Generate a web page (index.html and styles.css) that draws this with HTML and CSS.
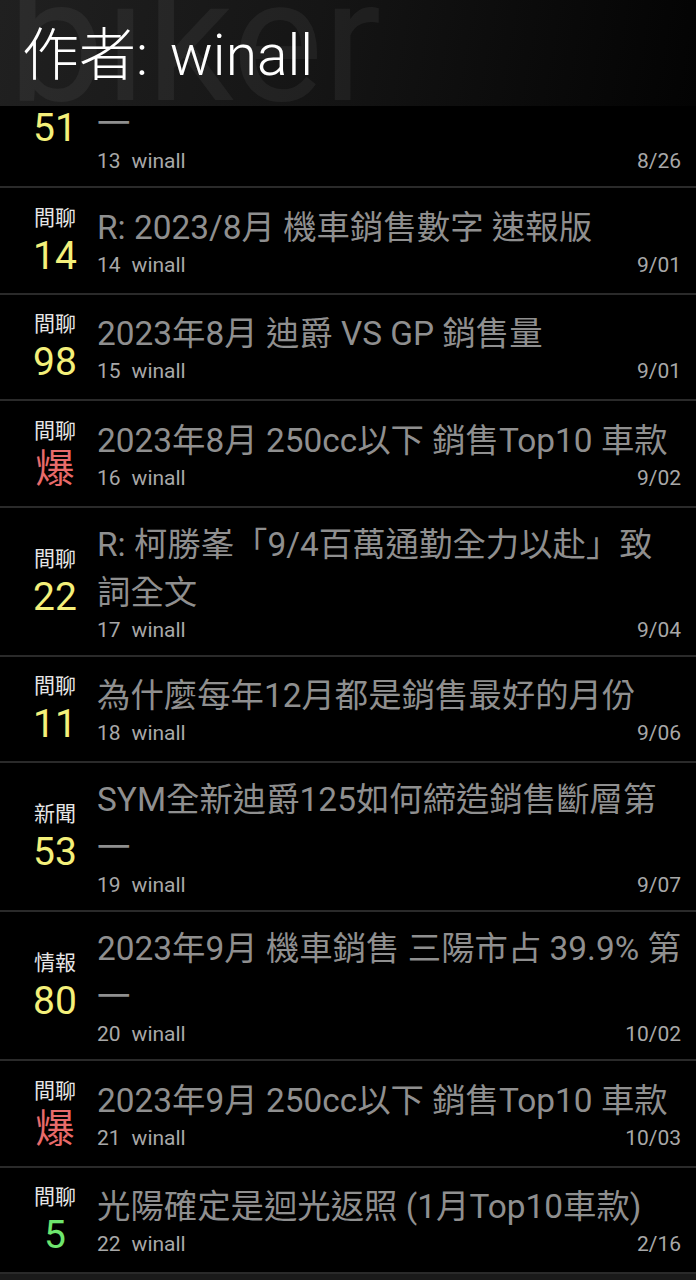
FILE: index.html
```html
<!DOCTYPE html>
<html lang="zh-Hant">
<head>
<meta charset="utf-8">
<title>作者: winall</title>
<link rel="stylesheet" href="styles.css">
</head>
<body>
<div class="screen">
  <header class="appbar">
    <span class="watermark">biker</span>
    <h1 class="appbar-title">作者: winall</h1>
  </header>
  <main class="list">
    <div class="row">
      <div class="side"><div class="tag">情報</div><div class="count yellow">51</div></div>
      <div class="body"><div class="title">2023年7月 機車銷售 三陽市占 40.1% 第一</div><div class="meta"><span class="num">13</span><span class="author">winall</span><span class="date">8/26</span></div></div>
    </div>
    <div class="row">
      <div class="side"><div class="tag">間聊</div><div class="count yellow">14</div></div>
      <div class="body"><div class="title">R: 2023/8月 機車銷售數字 速報版</div><div class="meta"><span class="num">14</span><span class="author">winall</span><span class="date">9/01</span></div></div>
    </div>
    <div class="row">
      <div class="side"><div class="tag">間聊</div><div class="count yellow">98</div></div>
      <div class="body"><div class="title">2023年8月 迪爵 VS GP 銷售量</div><div class="meta"><span class="num">15</span><span class="author">winall</span><span class="date">9/01</span></div></div>
    </div>
    <div class="row">
      <div class="side"><div class="tag">間聊</div><div class="count red">爆</div></div>
      <div class="body"><div class="title">2023年8月 250cc以下 銷售Top10 車款</div><div class="meta"><span class="num">16</span><span class="author">winall</span><span class="date">9/02</span></div></div>
    </div>
    <div class="row">
      <div class="side"><div class="tag">間聊</div><div class="count yellow">22</div></div>
      <div class="body"><div class="title">R: 柯勝峯「9/4百萬通勤全力以赴」致詞全文</div><div class="meta"><span class="num">17</span><span class="author">winall</span><span class="date">9/04</span></div></div>
    </div>
    <div class="row">
      <div class="side"><div class="tag">間聊</div><div class="count yellow">11</div></div>
      <div class="body"><div class="title">為什麼每年12月都是銷售最好的月份</div><div class="meta"><span class="num">18</span><span class="author">winall</span><span class="date">9/06</span></div></div>
    </div>
    <div class="row">
      <div class="side"><div class="tag">新聞</div><div class="count yellow">53</div></div>
      <div class="body"><div class="title">SYM全新迪爵125如何締造銷售斷層第一</div><div class="meta"><span class="num">19</span><span class="author">winall</span><span class="date">9/07</span></div></div>
    </div>
    <div class="row">
      <div class="side"><div class="tag">情報</div><div class="count yellow">80</div></div>
      <div class="body"><div class="title">2023年9月 機車銷售 三陽市占 39.9% 第一</div><div class="meta"><span class="num">20</span><span class="author">winall</span><span class="date">10/02</span></div></div>
    </div>
    <div class="row">
      <div class="side"><div class="tag">間聊</div><div class="count red">爆</div></div>
      <div class="body"><div class="title">2023年9月 250cc以下 銷售Top10 車款</div><div class="meta"><span class="num">21</span><span class="author">winall</span><span class="date">10/03</span></div></div>
    </div>
    <div class="row">
      <div class="side"><div class="tag">間聊</div><div class="count green">5</div></div>
      <div class="body"><div class="title">光陽確定是迴光返照 (1月Top10車款)</div><div class="meta"><span class="num">22</span><span class="author">winall</span><span class="date">2/16</span></div></div>
    </div>
    <div class="list-end"></div>
  </main>
</div>
</body>
</html>
```

FILE: styles.css
```css
* { box-sizing: border-box; }
html, body {
  margin: 0;
  padding: 0;
  background: #000;
}
body {
  font-family: Roboto, "Noto Sans CJK TC", sans-serif;
  color: #8f8f8f;
}
.screen {
  position: relative;
  width: 696px;
  height: 1280px;
  overflow: hidden;
  background: #000;
}
.appbar {
  position: absolute;
  top: 0;
  left: 0;
  right: 0;
  height: 106px;
  z-index: 2;
  overflow: hidden;
  background: linear-gradient(100deg, #202020 0%, #151515 45%, #0b0b0b 75%, #030303 100%);
}
.watermark {
  position: absolute;
  left: 8px;
  top: -45px;
  font-family: Roboto, sans-serif;
  font-size: 172px;
  line-height: 1;
  color: rgba(255, 255, 255, 0.055);
  white-space: nowrap;
}
.appbar-title {
  position: relative;
  margin: 0;
  padding: 21px 0 0 22px;
  font-family: Roboto, "Noto Sans CJK TC", sans-serif;
  font-weight: 300;
  font-size: 57px;
  line-height: 70px;
  word-spacing: 8px;
  color: #fff;
  white-space: nowrap;
}
.list {
  padding-top: 39px;
}
.row {
  display: flex;
  align-items: center;
  min-height: 106.5px;
  padding: 13px 15px 12px 0;
  border-bottom: 2px solid #2a2a2a;
}
.side {
  flex: 0 0 70px;
  margin-left: 20px;
  margin-right: 7px;
  display: flex;
  flex-direction: column;
  align-items: center;
}
.tag {
  font-size: 21px;
  line-height: 30px;
  color: #e6e6e6;
}
.count {
  font-size: 39px;
  line-height: 46px;
}
.yellow { color: #f4f07a; }
.red { color: #e86a6a; }
.green { color: #6ee66e; }
.body {
  flex: 1 1 auto;
  min-width: 0;
}
.title {
  font-size: 33.4px;
  line-height: 48px;
  color: #8f8f8f;
}
.meta {
  display: flex;
  align-items: baseline;
  font-size: 21px;
  line-height: 26px;
  color: #a8a8a8;
}
.num {
  margin-right: 11px;
}
.date {
  margin-left: auto;
}
.list-end {
  height: 40px;
  background: #1a1a1a;
}
```
